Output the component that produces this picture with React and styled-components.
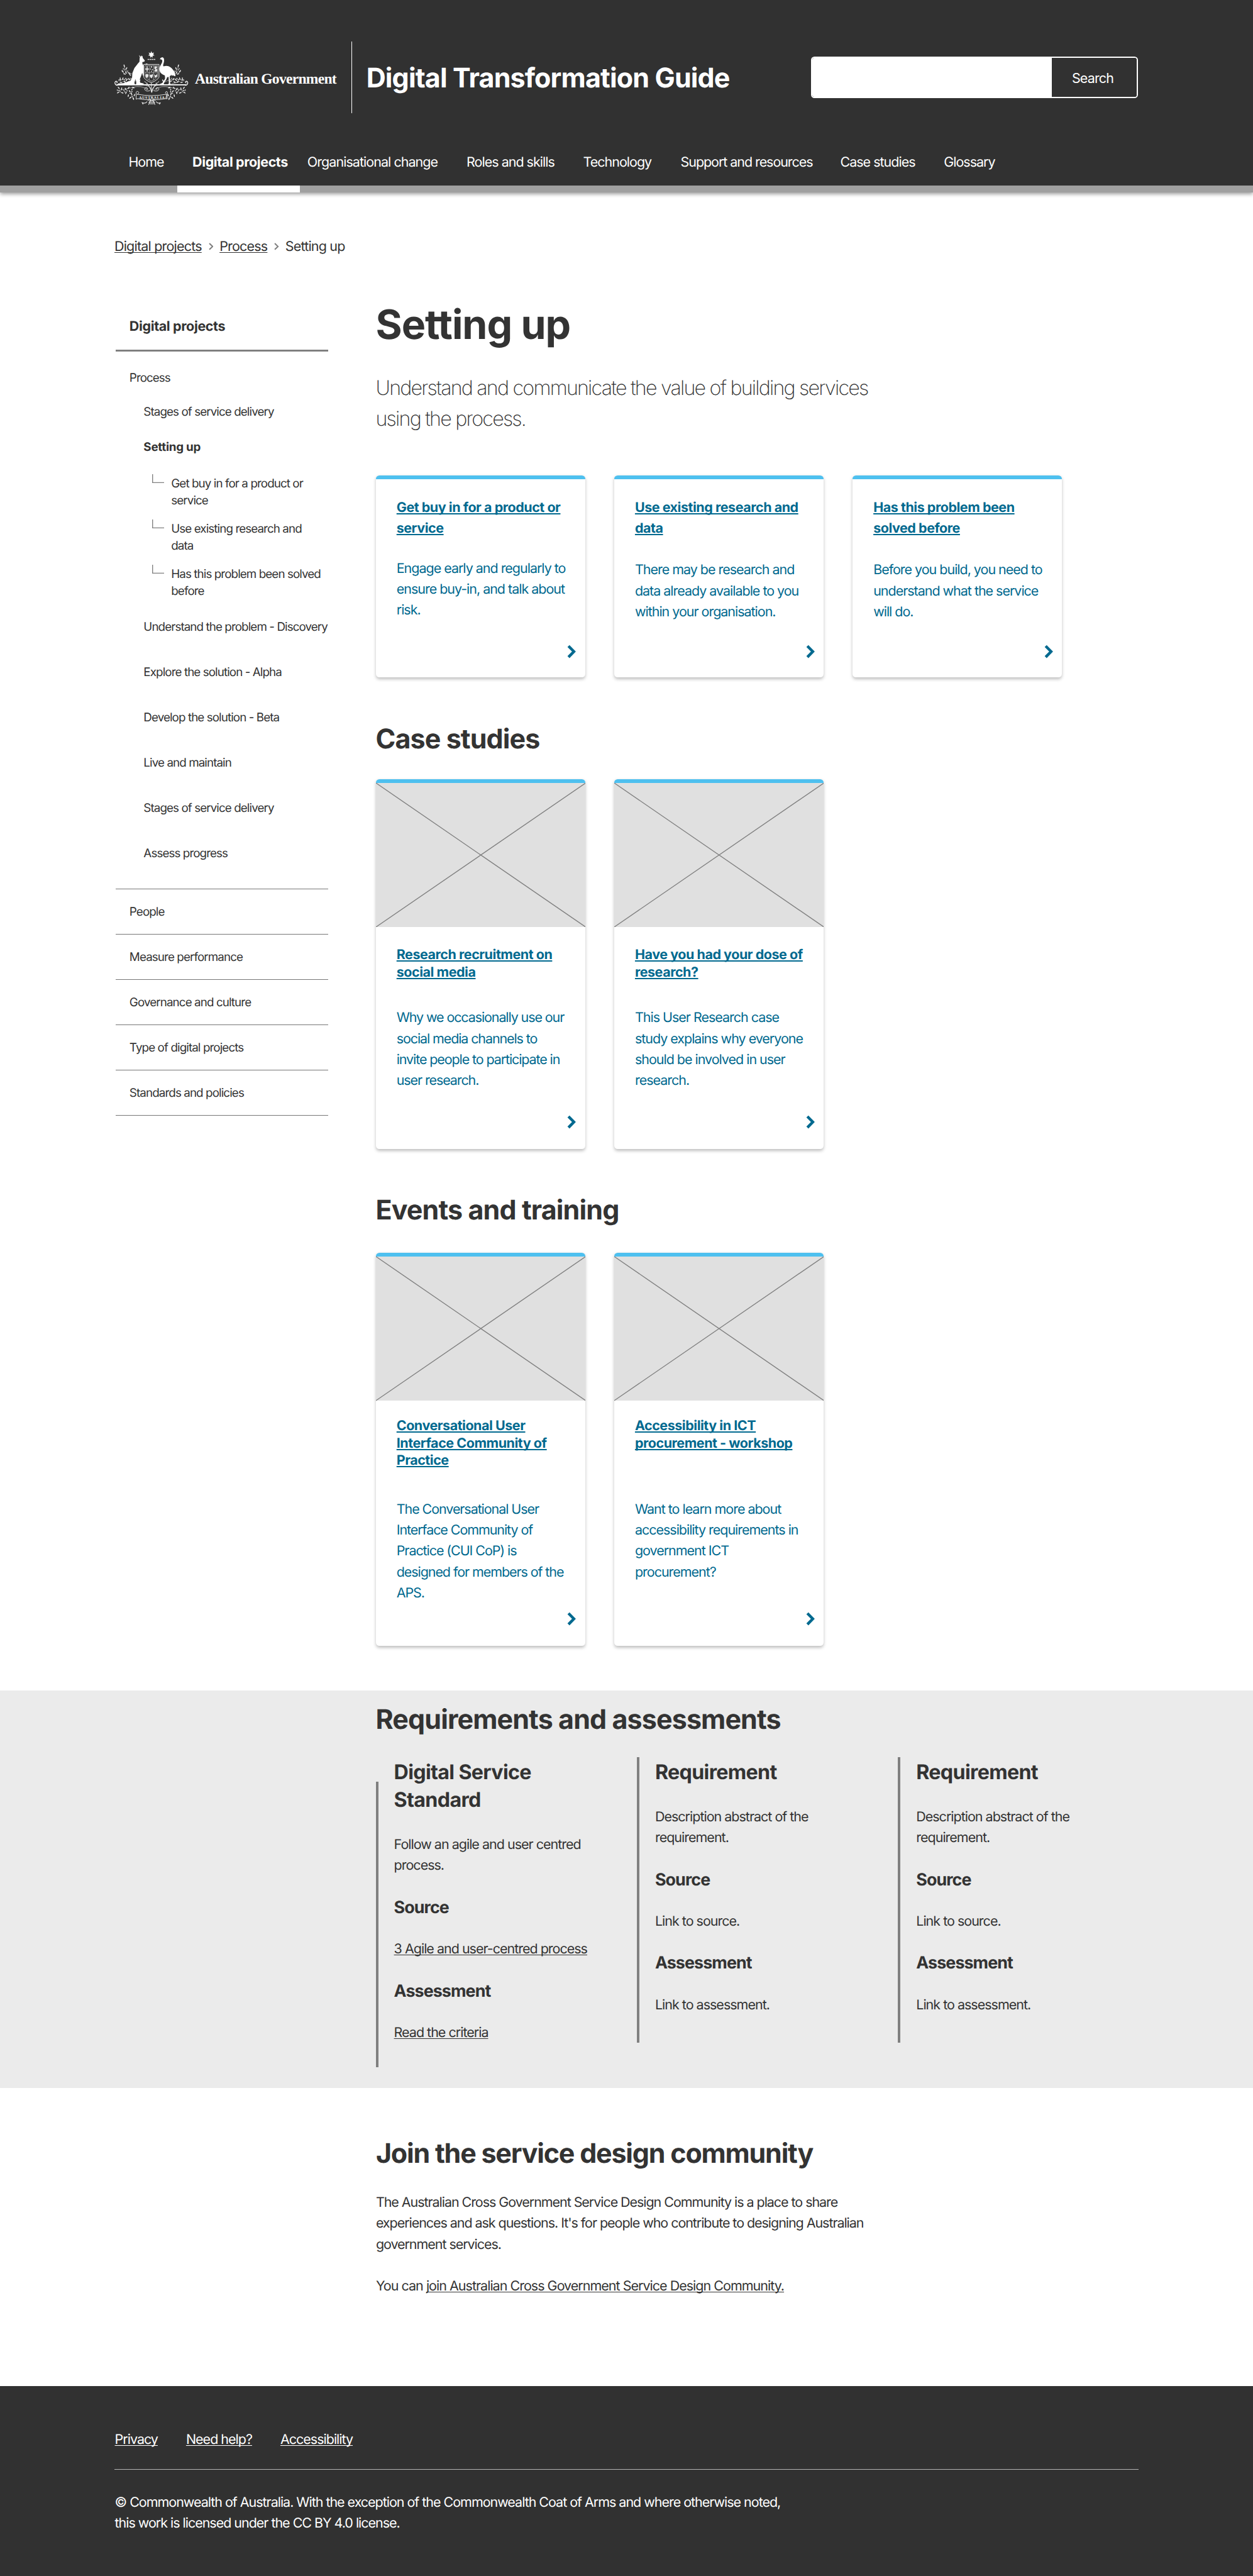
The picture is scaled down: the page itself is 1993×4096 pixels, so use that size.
import React from "react";
import styled, { createGlobalStyle, css } from "styled-components";

/* Design units are drawn at a fixed scale. */
const u = (n) => `${+(n * 0.692).toFixed(3)}px`;

const ink = "#333333";
const dark = "#313131";
const blue = "#00698f";
const sky = "#4ec0ef";
const rule = "#808080";

/* type(size, weight, lineHeight, tracking): the family is set slightly under its nominal size */
const type = (size, weight, line, track) => css`
  font-size: ${u(size * 0.97)};
  font-weight: ${weight};
  line-height: ${u(line)};
  letter-spacing: ${(p) => u(size * (p.$track ?? track))};
`;

const Global = createGlobalStyle`
  *, *::before, *::after { box-sizing: border-box; }
  html, body { margin: 0; padding: 0; background: #fff; }
  body { overflow-x: hidden; }
  h1, h2, h3, h4, p, ul { margin: 0; padding: 0; list-style: none; }
`;

const Page = styled.div`
  width: ${u(2880)};
  height: 4096px;
  display: flex;
  flex-direction: column;
  overflow: hidden;
  background: #fff;
  color: ${ink};
  font-family: Inter, "Liberation Sans", sans-serif;
  text-rendering: geometricPrecision;
  white-space: nowrap;
`;

/* ---------- header ---------- */
const Header = styled.header`
  background: ${dark};
  color: #fff;
  box-shadow: 0 ${u(5)} ${u(9)} rgba(0, 0, 0, 0.42);
`;
const TopRow = styled.div`
  display: flex;
  align-items: center;
  height: ${u(300)};
  padding: ${u(56)} ${u(264)} 0 ${u(262)};
`;
const Government = styled.span`
  margin: ${u(11)} 0 0 ${u(12)};
  width: ${u(360)};
  font-family: "Liberation Serif", serif;
  font-weight: 700;
  font-size: ${u(34)};
  letter-spacing: ${u(-1.02)};
`;
const Divider = styled.span`
  width: ${u(2)};
  height: ${u(164)};
  background: #fff;
`;
const SiteTitle = styled.span`
  ${type(64, 700, 80, -0.0187)}
  margin: ${u(4)} 0 0 ${u(32)};
`;
const Search = styled.div`
  display: flex;
  width: ${u(752)};
  height: ${u(96)};
  margin-left: auto;
  border: ${u(2.9)} solid #fff;
  border-radius: ${u(8)};
  overflow: hidden;
`;
const SearchField = styled.input`
  width: ${u(551)};
  border: 0;
  padding: 0;
  background: #fff;
`;
const SearchButton = styled.button`
  flex: 1;
  padding: ${u(4)} ${u(8)} 0 0;
  border: 0;
  background: ${dark};
  color: #fff;
  font-family: inherit;
  ${type(32, 400, 48, -0.039)}
`;
const Nav = styled.nav`
  display: grid;
  grid-template-columns:
    ${u(144)} ${u(282)} ${u(382)} ${u(268)} ${u(224)} ${u(367)} ${u(238)} ${u(200)};
  height: ${u(142)};
  padding-left: ${u(263)};
  border-bottom: ${u(16)} solid #a0a0a0;
`;
const NavItem = styled.a`
  ${type(32, 400, 48, -0.0445)}
  height: ${u(142)};
  padding: ${u(49)} 0 0 ${(p) => u((p.$inset || 0) + 1.4)};
  border-bottom: ${u(16)} solid transparent;
  ${(p) => p.$active && css`font-weight: 700; border-color: #fff;`}
`;

/* ---------- breadcrumb ---------- */
const Crumbs = styled.nav`
  ${type(32, 400, 48, -0.0355)}
  display: flex;
  align-items: center;
  gap: ${u(14)};
  padding: ${u(101)} 0 0 ${u(263)};
  svg { margin-left: ${u(2)}; }
`;
const Link = styled.a`
  text-decoration: underline;
  text-decoration-thickness: ${(p) => u(p.$thick || 2)};
  text-underline-offset: ${u(3)};
  text-decoration-skip-ink: none;
`;

/* ---------- body columns ---------- */
const Main = styled.main`
  display: grid;
  grid-template-columns: ${u(488)} 1fr;
  column-gap: ${u(109.5)};
  padding-left: ${u(266)};
`;
const Sidebar = styled.aside`
  padding-top: ${u(135.7)};
`;
const SideTitle = styled.h2`
  ${type(32, 700, 48, -0.016)}
  height: ${u(81.3)};
  padding-left: ${u(31.5)};
  border-bottom: ${u(4.4)} solid ${rule};
`;
const SideText = styled.div`
  ${type(28, 400, 40, -0.0485)}
  padding: ${u(40)} 0 0 ${u(31.5)};
`;
const SideGroup = styled.ul`
  ${type(28, 400, 40, -0.047)}
  padding: ${u(38.3)} 0 ${u(61.6)} ${u(64)};
`;
const SideItem = styled.li`
  margin-bottom: ${(p) => u(p.$gap ?? 64)};
  &:last-child { margin-bottom: 0; }
  ${(p) => p.$current && css`font-weight: 700; letter-spacing: ${u(28 * -0.0127)};`}
`;
const SubList = styled.ul`
  display: grid;
  row-gap: ${u(24.2)};
  margin-bottom: ${u(41.8)};
  padding-left: ${u(19.7)};
  svg { margin-top: ${u(-1.4)}; }
`;
const SubItem = styled.li`
  display: flex;
  align-items: flex-start;
  gap: ${u(15.8)};
`;
const SideSection = styled.div`
  ${type(28, 400, 40, -0.0465)}
  height: ${u(104)};
  padding: ${u(31.9)} 0 0 ${u(31.5)};
  border-top: ${u(2)} solid #767676;
  &:last-child { height: ${u(106)}; border-bottom: ${u(2)} solid #767676; }
`;

const Content = styled.div`
  padding-top: ${u(99.1)};
`;
const PageTitle = styled.h1`
  ${type(96, 700, 112, -0.0153)}
`;
const Lead = styled.p`
  ${type(48, 200, 72, -0.0538)}
  margin-top: ${u(52.9)};
`;
const SectionTitle = styled.h2`
  ${type(64, 700, 80, -0.0195)}
  margin-top: ${(p) => u(p.$top || 0)};
`;
const Cards = styled.div`
  display: grid;
  grid-template-columns: repeat(3, ${u(482)});
  column-gap: ${u(66)};
  margin-top: ${(p) => u(p.$top)};
`;
const CardBox = styled.article`
  display: flex;
  flex-direction: column;
  height: ${(p) => u(p.$height)};
  border-top: ${u(8.8)} solid ${sky};
  border-radius: ${u(8)};
  background: #fff;
  color: ${blue};
  box-shadow: 0 ${u(4)} ${u(8)} rgba(0, 0, 0, 0.25);
`;
const CardTitle = styled.h3`
  ${type(32, 700, 48, -0.0205)}
  line-height: ${(p) => u(p.$line)};
  min-height: ${(p) => u(p.$min || 0)};
  margin: ${(p) => u(p.$top)} 0 0 ${u(48)};
`;
const CardText = styled.p`
  ${type(32, 400, 48, -0.0455)}
  margin: ${(p) => u(p.$top)} 0 0 ${u(48)};
`;
const CardArrow = styled.div`
  display: flex;
  margin: auto ${u(21)} ${(p) => u(p.$bottom)} auto;
`;

/* ---------- requirements band ---------- */
const Band = styled.section`
  height: ${u(914)};
  margin-top: ${u(101.5)};
  padding: ${u(27.4)} 0 0 ${u(863.5)};
  background: #ebebeb;
`;
const Columns = styled.div`
  display: grid;
  grid-template-columns: repeat(3, ${u(600.2)});
  margin-top: ${u(46.7)};
`;
const Column = styled.div`
  display: flex;
  align-items: flex-start;
`;
const ColumnBody = styled.div`
  padding-top: ${u(2)};
`;
const Bar = styled.span`
  width: ${u(5.8)};
  height: ${u(655.5)};
  margin: ${(p) => (p.$drop ? u(56) : 0)} ${u(36.2)} 0 0;
  background: ${rule};
`;
const ReqTitle = styled.h3`
  ${type(48, 700, 64, -0.02)}
`;
const ReqSub = styled.h4`
  ${type(40, 700, 56, -0.033)}
  margin-top: ${u(44)};
`;
const ReqText = styled.p`
  ${type(32, 400, 48, -0.0445)}
  margin-top: ${(p) => u(p.$top || 44)};
`;

/* ---------- community ---------- */
const Community = styled.section`
  flex: 1;
  padding: ${u(111.4)} 0 0 ${u(864)};
`;
const Paragraph = styled.p`
  ${type(32, 400, 48, -0.047)}
  margin-top: ${u(48.6)};
`;

/* ---------- footer ---------- */
const Footer = styled.footer`
  height: ${u(436)};
  padding: ${u(99)} ${u(263)} 0;
  background: ${dark};
  color: #fff;
`;
const FooterLinks = styled.nav`
  ${type(32, 400, 48, -0.0445)}
  display: flex;
  gap: ${u(65)};
  padding: 0 0 ${u(44)} ${u(0.8)};
  border-bottom: ${u(2)} solid #b4b4b4;
`;
const Legal = styled.p`
  ${type(32, 400, 48, -0.0457)}
  margin: ${u(51.5)} 0 0 ${u(0.8)};
`;

/* ---------- drawings ---------- */
const Chevron = ({ w, h, stroke, color }) => (
  <svg width={w * 0.692} height={h * 0.692} viewBox={`0 0 ${w} ${h}`} fill="none" stroke={color} strokeWidth={stroke}>
    <path d={`M${stroke * 0.5} ${stroke * 0.5} L${w - stroke * 0.75} ${h / 2} L${stroke * 0.5} ${h - stroke * 0.5}`} />
  </svg>
);

const Elbow = () => (
  <svg width={28 * 0.692} height={21 * 0.692} viewBox="0 0 28 21" fill="none" stroke={rule} strokeWidth="2">
    <path d="M1 0 V19.5 H28" />
  </svg>
);

const PlaceholderArt = styled.svg`
  display: block;
  flex: none;
  width: 100%;
  height: ${u(331)};
`;
const Placeholder = () => (
  <PlaceholderArt viewBox="0 0 482 331" preserveAspectRatio="none">
    <rect width="482" height="331" fill="#e0e0e0" />
    <path d="M0 0 L482 331 M482 0 L0 331" stroke="#808080" strokeWidth="2" />
  </PlaceholderArt>
);

const leaves = [
  [72, 120, 75], [88, 138, 110], [62, 160, 40], [84, 166, 60], [106, 170, 20], [112, 182, 45], [74, 176, 15],
  [45, 214, 80], [62, 208, 110], [50, 234, 10], [88, 218, 130], [106, 212, 60], [124, 226, 20], [98, 232, 150], [76, 230, 45],
  [34, 272, 50], [54, 278, 100], [30, 304, 150], [58, 306, 20], [82, 280, 60], [102, 272, 130], [84, 306, 110],
  [110, 296, 50], [134, 270, 20], [100, 326, 100], [122, 314, 60], [136, 346, 80], [114, 340, 140], [142, 322, 110],
  [160, 212, 60], [178, 222, 120],
];
const berries = [
  [66, 140], [58, 152], [72, 148], [96, 156], [44, 204], [36, 216], [72, 216], [82, 206], [118, 206], [132, 214],
  [24, 286], [36, 290], [44, 298], [70, 290], [76, 300], [92, 292], [124, 284], [126, 298], [112, 310], [128, 332],
];

const Sprig = () => (
  <g>
    <g fill="none" stroke="#ddd" strokeWidth="2.8">
      <path d="M70 112 Q76 168 124 176" />
      <path d="M30 224 Q90 198 150 224 Q200 250 240 262" />
      <path d="M22 292 Q80 282 130 268 Q190 252 236 284" />
      <path d="M132 268 Q112 310 134 352" />
      <path d="M60 226 Q90 240 120 244" />
    </g>
    {leaves.map(([x, y, a], i) => (
      <ellipse key={i} cx={x} cy={y} rx="9.5" ry="3.4" fill="#f2f2f2" transform={`rotate(${a} ${x} ${y})`} />
    ))}
    {berries.map(([x, y], i) => <circle key={i} cx={x} cy={y} r="3.6" fill="#eee" />)}
  </g>
);

const Arms = styled.svg`
  flex: none;
  width: ${u(174)};
  height: ${u(134)};
`;
const CoatOfArms = () => (
  <Arms viewBox="0 0 522 402">
    <Sprig />
    <g transform="translate(517 0) scale(-1 1)"><Sprig /></g>
    {/* star and wreath */}
    <path fill="#fff" d="M259 18 L264 32 L278 28 L271 40 L281 49 L268 50 L266 65 L259 55 L252 65 L250 50 L237 49 L247 40 L240 28 L254 32 Z" />
    <path stroke="#ddd" strokeWidth="7" strokeDasharray="11 3" d="M233 76 H286" />
    {/* ground scroll line */}
    <g fill="none" stroke="#fff">
      <path strokeWidth="8" d="M20 251 H498" />
      <path strokeWidth="5" d="M26 254 C6 256 2 228 16 226 C26 226 26 238 17 238" />
      <path strokeWidth="5" d="M492 254 C512 256 516 228 502 226 C492 226 492 238 501 238" />
    </g>
    {/* kangaroo */}
    <path fill="#fff" d="M174 46 L187 58 L190 49 L198 54 L200 66 L214 84 L211 91 L197 94 L197 104 L206 124 L214 110 L226 104 L236 108 L222 114 L212 136 L209 158 L210 178 L201 190 L196 168 L186 196 L178 216 L182 236 L206 242 L206 249 L154 249 L155 226 L148 212 L142 238 L146 249 L28 249 L28 242 L66 240 L116 222 L126 200 L128 170 L142 136 L168 102 L177 92 L178 70 L180 62 Z" />
    {/* emu */}
    <path fill="#fff" d="M318 76 L322 66 L334 61 C346 62 349 76 346 92 C342 112 336 118 344 124 C372 112 398 130 412 152 C422 168 428 182 424 192 L398 182 L386 192 L389 242 L394 249 L370 249 L380 242 L378 196 L368 198 L362 214 L345 240 L346 249 L312 249 L334 240 L354 208 L352 186 C328 178 312 162 314 138 C316 118 338 102 334 82 L326 75 Z" />
    {/* shield */}
    <path fill={dark} stroke="#eee" strokeWidth="4" d="M206 110 H312 V198 Q300 220 259 236 Q218 220 206 198 Z" />
    <path fill="none" stroke="#ccc" strokeWidth="3" d="M215 118 H303 V194 Q292 212 259 226 Q226 212 215 194 Z M244 118 V218 M274 118 V218 M215 168 H303" />
    <g fill="#e6e6e6">
      <path d="M226 122 H233 V138 H241 V146 H233 V162 H226 V146 H218 V138 H226 Z" />
      <path d="M280 124 h18 v12 h-5 v6 h7 v18 h-20 v-10 h5 v-8 h-5 z" />
      <circle cx="259" cy="128" r="5" /><circle cx="253" cy="142" r="4" /><circle cx="266" cy="146" r="4" /><circle cx="259" cy="158" r="4" />
      <path d="M218 182 q10 -12 22 0 l-4 16 l-8 6 l-8 -8 z" />
      <path d="M248 180 q10 4 22 -4 q2 18 -8 30 q-16 -4 -14 -26 z" />
      <path d="M279 178 l10 8 l10 -10 v18 l-16 10 z" />
    </g>
    {/* stems and curls */}
    <g fill="none" stroke="#f0f0f0" strokeWidth="4">
      <path d="M262 304 C262 268 236 262 228 236 M262 304 C262 268 286 262 294 236 M262 304 C256 276 240 256 212 226 M262 304 C268 276 284 256 312 226" />
      <path d="M252 288 C244 296 216 298 213 280 C213 268 232 266 233 278 C233 284 225 284 224 279" />
      <path d="M272 288 C280 296 308 298 311 280 C311 268 292 266 291 278 C291 284 299 284 300 279" />
      <path d="M259 236 V300" />
    </g>
    {/* ribbon */}
    <g fill={dark} stroke="#eee" strokeWidth="4">
      <path d="M160 316 Q262 334 364 316 L360 346 Q262 364 164 346 L154 350 L154 304 Q156 292 168 298 Q178 306 168 314 Z" />
      <path d="M364 316 Q350 304 360 298 Q370 294 370 308 L368 348 L360 346 Z" />
    </g>
    <text x="262" y="346" textAnchor="middle" textLength="176" fill="#fff" fontFamily="Liberation Serif, serif" fontWeight="700" fontSize="25">AUSTRALIA</text>
    <g fill="none" stroke="#f0f0f0" strokeWidth="4.5">
      <path d="M236 360 Q240 346 256 352 L240 388 M286 360 Q282 346 268 352 L284 388 M230 366 Q218 384 196 374 L202 386 M292 366 Q304 384 322 374 L314 386 M244 362 H280 M240 372 H284 M248 382 H276" />
    </g>
  </Arms>
);

/* ---------- content ---------- */
const lines = (arr) => arr.map((t, i) => <React.Fragment key={i}>{i > 0 && <br />}{t}</React.Fragment>);

const navItems = [
  { label: "Home", inset: 31 },
  { label: "Digital projects", inset: 34, active: true, track: -0.0175 },
  { label: "Organisational change", inset: 16, track: -0.0425 },
  { label: "Roles and skills" },
  { label: "Technology" },
  { label: "Support and resources", track: -0.0474 },
  { label: "Case studies" },
  { label: "Glossary" },
];

const subItems = [
  ["Get buy in for a product or", "service"],
  ["Use existing research and", "data"],
  ["Has this problem been solved", "before"],
];
const stages = [
  "Understand the problem - Discovery",
  "Explore the solution - Alpha",
  "Develop the solution - Beta",
  "Live and maintain",
  "Stages of service delivery",
  "Assess progress",
];
const sections = ["People", "Measure performance", "Governance and culture", "Type of digital projects", "Standards and policies"];

const topics = [
  { title: ["Get buy in for a product or", "service"], text: ["Engage early and regularly to", "ensure buy-in, and talk about", "risk."], gap: 44.2 },
  { title: ["Use existing research and", "data"], text: ["There may be research and", "data already available to you", "within your organisation."], gap: 48.2 },
  { title: ["Has this problem been", "solved before"], text: ["Before you build, you need to", "understand what the service", "will do."], gap: 48.2 },
];
const cases = [
  { title: ["Research recruitment on", "social media"], text: ["Why we occasionally use our", "social media channels to", "invite people to participate in", "user research."], track: -0.0495 },
  { title: ["Have you had your dose of", "research?"], text: ["This User Research case", "study explains why everyone", "should be involved in user", "research."] },
];
const events = [
  { title: ["Conversational User", "Interface Community of", "Practice"], text: ["The Conversational User", "Interface Community of", "Practice (CUI CoP) is", "designed for members of the", "APS."], track: -0.048 },
  { title: ["Accessibility in ICT", "procurement - workshop"], text: ["Want to learn more about", "accessibility requirements in", "government ICT", "procurement?"] },
];
const requirements = [
  { title: ["Digital Service", "Standard"], text: ["Follow an agile and user centred", "process."], source: "3 Agile and user-centred process", assessment: "Read the criteria", linked: true },
  { title: ["Requirement"], text: ["Description abstract of the", "requirement."], source: "Link to source.", assessment: "Link to assessment." },
  { title: ["Requirement"], text: ["Description abstract of the", "requirement."], source: "Link to source.", assessment: "Link to assessment." },
];

const Card = ({ item, height, image, titleTop, line, min, textTop, arrowBottom }) => (
  <CardBox $height={height}>
    {image && <Placeholder />}
    <CardTitle $top={titleTop} $line={line} $min={min}>
      <Link $thick={3}>{lines(item.title)}</Link>
    </CardTitle>
    <CardText $top={textTop} $track={item.track}>{lines(item.text)}</CardText>
    <CardArrow $bottom={arrowBottom}>
      <Chevron w={20.5} h={32} stroke={6.4} color={blue} />
    </CardArrow>
  </CardBox>
);

export default function App() {
  return (
    <Page>
      <Global />
      <Header>
        <TopRow>
          <CoatOfArms />
          <Government>Australian Government</Government>
          <Divider />
          <SiteTitle>Digital Transformation Guide</SiteTitle>
          <Search>
            <SearchField aria-label="Search" />
            <SearchButton>Search</SearchButton>
          </Search>
        </TopRow>
        <Nav>
          {navItems.map((n) => (
            <NavItem key={n.label} $inset={n.inset} $active={n.active} $track={n.track}>{n.label}</NavItem>
          ))}
        </Nav>
      </Header>

      <Crumbs>
        <Link>Digital projects</Link>
        <Chevron w={11} h={17} stroke={3} color={rule} />
        <Link>Process</Link>
        <Chevron w={11} h={17} stroke={3} color={rule} />
        <span>Setting up</span>
      </Crumbs>

      <Main>
        <Sidebar>
          <SideTitle>Digital projects</SideTitle>
          <SideText>Process</SideText>
          <SideGroup>
            <SideItem $gap={41.4}>Stages of service delivery</SideItem>
            <SideItem $gap={42.7} $current>Setting up</SideItem>
            <SubList>
              {subItems.map((s) => (
                <SubItem key={s[0]}><Elbow /><span>{lines(s)}</span></SubItem>
              ))}
            </SubList>
            {stages.map((s) => <SideItem key={s}>{s}</SideItem>)}
          </SideGroup>
          {sections.map((s) => <SideSection key={s}>{s}</SideSection>)}
        </Sidebar>

        <Content>
          <PageTitle>Setting up</PageTitle>
          <Lead>{lines(["Understand and communicate the value of building services", "using the process."])}</Lead>
          <Cards $top={93}>
            {topics.map((t) => (
              <Card key={t.title[0]} item={t} height={464} titleTop={42} line={48} textTop={t.gap} arrowBottom={42} />
            ))}
          </Cards>
          <SectionTitle $top={103.6}>Case studies</SectionTitle>
          <Cards $top={51.6}>
            {cases.map((t) => (
              <Card key={t.title[0]} item={t} image height={849} titleTop={44.2} line={40} textTop={60.6} arrowBottom={46} />
            ))}
          </Cards>
          <SectionTitle $top={101.3}>Events and training</SectionTitle>
          <Cards $top={57.9}>
            {events.map((t) => (
              <Card key={t.title[0]} item={t} image height={903} titleTop={38.4} line={40} min={120} textTop={67.6} arrowBottom={47} />
            ))}
          </Cards>
        </Content>
      </Main>

      <Band>
        <SectionTitle>Requirements and assessments</SectionTitle>
        <Columns>
          {requirements.map((r, i) => (
            <Column key={i}>
              <Bar $drop={r.linked} />
              <ColumnBody>
                <ReqTitle>{lines(r.title)}</ReqTitle>
                <ReqText $top={47.5}>{lines(r.text)}</ReqText>
                <ReqSub>Source</ReqSub>
                <ReqText>{r.linked ? <Link>{r.source}</Link> : r.source}</ReqText>
                <ReqSub>Assessment</ReqSub>
                <ReqText>{r.linked ? <Link>{r.assessment}</Link> : r.assessment}</ReqText>
              </ColumnBody>
            </Column>
          ))}
        </Columns>
      </Band>

      <Community>
        <SectionTitle $track={-0.0267}>Join the service design community</SectionTitle>
        <Paragraph>
          {lines([
            "The Australian Cross Government Service Design Community is a place to share",
            "experiences and ask questions. It's for people who contribute to designing Australian",
            "government services.",
          ])}
        </Paragraph>
        <Paragraph $track={-0.044}>You can <Link>join Australian Cross Government Service Design Community.</Link></Paragraph>
      </Community>

      <Footer>
        <FooterLinks>
          <Link>Privacy</Link>
          <Link>Need help?</Link>
          <Link>Accessibility</Link>
        </FooterLinks>
        <Legal>
          {lines([
            "© Commonwealth of Australia. With the exception of the Commonwealth Coat of Arms and where otherwise noted,",
            "this work is licensed under the CC BY 4.0 license.",
          ])}
        </Legal>
      </Footer>
    </Page>
  );
}
